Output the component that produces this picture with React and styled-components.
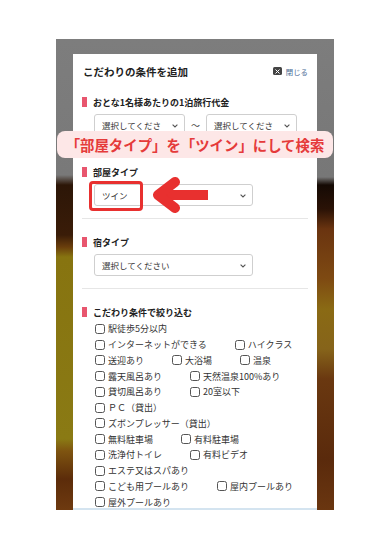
import React from 'react'
import styled, { createGlobalStyle } from 'styled-components'

const GlobalStyle = createGlobalStyle`
  html, body {
    margin: 0;
    padding: 0;
    background: #fff;
  }
  body {
    font-family: "Noto Sans CJK JP", "Noto Sans", sans-serif;
    color: #333;
  }
`

const leftBlur = `linear-gradient(to bottom,
  #7d7d7d 0, #797979 136px, #2c1607 146px, #3a1c08 196px, #6a3e0c 208px,
  #877410 218px, #8a7a14 400px, #7e5410 412px, #5c2c0a 440px, #6e3a10 471px)`

const rightBlur = `linear-gradient(to bottom,
  #7d7d7d 0, #777 138px, #150a04 146px, #2a1206 170px, #6a3410 190px,
  #7e4a12 240px, #8a6a14 270px, #86641a 310px, #6a3810 340px, #5a2a0c 420px, #6a3610 471px)`

const Page = styled.div`
  width: 390px;
  height: 550px;
  padding: 39px 56px 40px;
  box-sizing: border-box;
`

const Frame = styled.div`
  position: relative;
  height: 471px;
  display: flex;
  flex-direction: column;
  padding: 15px 17px 0;
  box-sizing: border-box;
  background:
    ${leftBlur} left top / 50% 100% no-repeat,
    ${rightBlur} right top / 50% 100% no-repeat;
`

const Modal = styled.div`
  flex: 1;
  min-height: 0;
  overflow: hidden;
  background: #fff;
  border-bottom: 2px solid #d4e4f0;
  padding: 0 9px;
`

const Header = styled.div`
  display: flex;
  align-items: center;
  justify-content: space-between;
  height: 34px;
  padding-left: 1px;
`

const Title = styled.h1`
  margin: 0;
  font-size: 10.5px;
  font-weight: 700;
  color: #222;
`

const Close = styled.button`
  display: flex;
  align-items: center;
  gap: 4px;
  padding: 0;
  border: 0;
  background: none;
  font-family: inherit;
  font-size: 7.4px;
  color: #4b6a96;
`

const CloseBox = styled.span`
  display: flex;
  align-items: center;
  justify-content: center;
  width: 9px;
  height: 8px;
  border-radius: 1.5px;
  background: #444;
`

const Section = styled.section`
  padding: ${p => (p.$first ? '9px' : '18px')} 0 12px;
  border-top: ${p => (p.$first ? 'none' : '1px solid #e6e6e6')};
`

const SectionHead = styled.div`
  display: flex;
  align-items: center;
  gap: 6px;
  height: 10px;
  font-size: 9px;
  font-weight: 700;
  color: #222;

  &::before {
    content: '';
    width: 5px;
    height: 10px;
    background: #e8566e;
  }
`

const SelectRow = styled.div`
  display: flex;
  align-items: center;
  gap: 6px;
  margin-top: 7px;
  padding-left: 12px;
`

const Select = styled.div`
  position: relative;
  display: flex;
  align-items: center;
  flex: none;
  width: ${p => p.$w}px;
  height: 22px;
  padding: 0 7px;
  box-sizing: border-box;
  border: 1px solid #cfcfcf;
  border-radius: 3px;
  background: #fff;
  font-size: 8.5px;
  color: #333;
  white-space: nowrap;

  & > svg {
    position: absolute;
    right: 6px;
    top: 9px;
  }
`

const Tilde = styled.span`
  font-size: 9px;
  color: #444;
`

const CheckList = styled.div`
  display: flex;
  flex-direction: column;
  margin-top: 4px;
  padding-left: 13px;
`

const CheckRow = styled.div`
  display: flex;
  align-items: center;
  gap: 28px;
  height: 15.75px;
`

const CheckItem = styled.label`
  display: flex;
  align-items: center;
  gap: 3px;
  font-size: 9px;
  color: #333;
  white-space: nowrap;
`

const Box = styled.span`
  width: 10px;
  height: 10px;
  box-sizing: border-box;
  border: 1px solid #555;
  border-radius: 2.5px;
  background: #fff;
`

const Banner = styled.div`
  position: absolute;
  left: 1px;
  top: 92px;
  width: 276px;
  height: 27px;
  display: flex;
  align-items: center;
  justify-content: center;
  border-radius: 8px;
  background: #fde7e7;
  font-size: 14.4px;
  font-weight: 700;
  color: #e53a3a;
  white-space: nowrap;
`

const Highlight = styled.div`
  position: absolute;
  left: 33px;
  top: 142px;
  width: 54px;
  height: 30px;
  box-sizing: border-box;
  border: 3px solid #e8302f;
  border-radius: 4px;
`

const Arrow = styled.svg`
  position: absolute;
  left: 94px;
  top: 136px;
`

const Chevron = () => (
  <svg width="6" height="4" viewBox="0 0 6 4">
    <path d="M0.6 0.6 L3 3 L5.4 0.6" fill="none" stroke="#555" strokeWidth="1.1" />
  </svg>
)

const checkRows = [
  ['駅徒歩5分以内'],
  ['インターネットができる', 'ハイクラス'],
  ['送迎あり', '大浴場', '温泉'],
  ['露天風呂あり', '天然温泉100%あり'],
  ['貸切風呂あり', '20室以下'],
  ['ＰＣ（貸出）'],
  ['ズボンプレッサー（貸出）'],
  ['無料駐車場', '有料駐車場'],
  ['洗浄付トイレ', '有料ビデオ'],
  ['エステ又はスパあり'],
  ['こども用プールあり', '屋内プールあり'],
  ['屋外プールあり'],
]

const App = () => (
  <Page>
    <GlobalStyle />
    <Frame>
      <Modal>
        <Header>
          <Title>こだわりの条件を追加</Title>
          <Close>
            <CloseBox>
              <svg width="5" height="5" viewBox="0 0 5 5">
                <path d="M0.5 0.5 L4.5 4.5 M4.5 0.5 L0.5 4.5" stroke="#fff" strokeWidth="1" />
              </svg>
            </CloseBox>
            閉じる
          </Close>
        </Header>

        <Section $first>
          <SectionHead>おとな1名様あたりの1泊旅行代金</SectionHead>
          <SelectRow>
            <Select $w={91}>選択してくださ<Chevron /></Select>
            <Tilde>〜</Tilde>
            <Select $w={91}>選択してくださ<Chevron /></Select>
          </SelectRow>
        </Section>

        <Section>
          <SectionHead>部屋タイプ</SectionHead>
          <SelectRow>
            <Select $w={159}>ツイン<Chevron /></Select>
          </SelectRow>
        </Section>

        <Section>
          <SectionHead>宿タイプ</SectionHead>
          <SelectRow>
            <Select $w={159}>選択してください<Chevron /></Select>
          </SelectRow>
        </Section>

        <Section>
          <SectionHead>こだわり条件で絞り込む</SectionHead>
          <CheckList>
            {checkRows.map((row, i) => (
              <CheckRow key={i}>
                {row.map(label => (
                  <CheckItem key={label}>
                    <Box />
                    {label}
                  </CheckItem>
                ))}
              </CheckRow>
            ))}
          </CheckList>
        </Section>
      </Modal>

      <Banner>「部屋タイプ」を「ツイン」にして検索</Banner>
      <Highlight />
      <Arrow width="62" height="40" viewBox="0 0 62 40">
        <path d="M9 20 H58" stroke="#e8302f" strokeWidth="10" />
        <polyline
          points="25,7 8,20 25,33"
          fill="none"
          stroke="#e8302f"
          strokeWidth="10"
          strokeLinecap="round"
          strokeLinejoin="round"
        />
      </Arrow>
    </Frame>
  </Page>
)

export default App
